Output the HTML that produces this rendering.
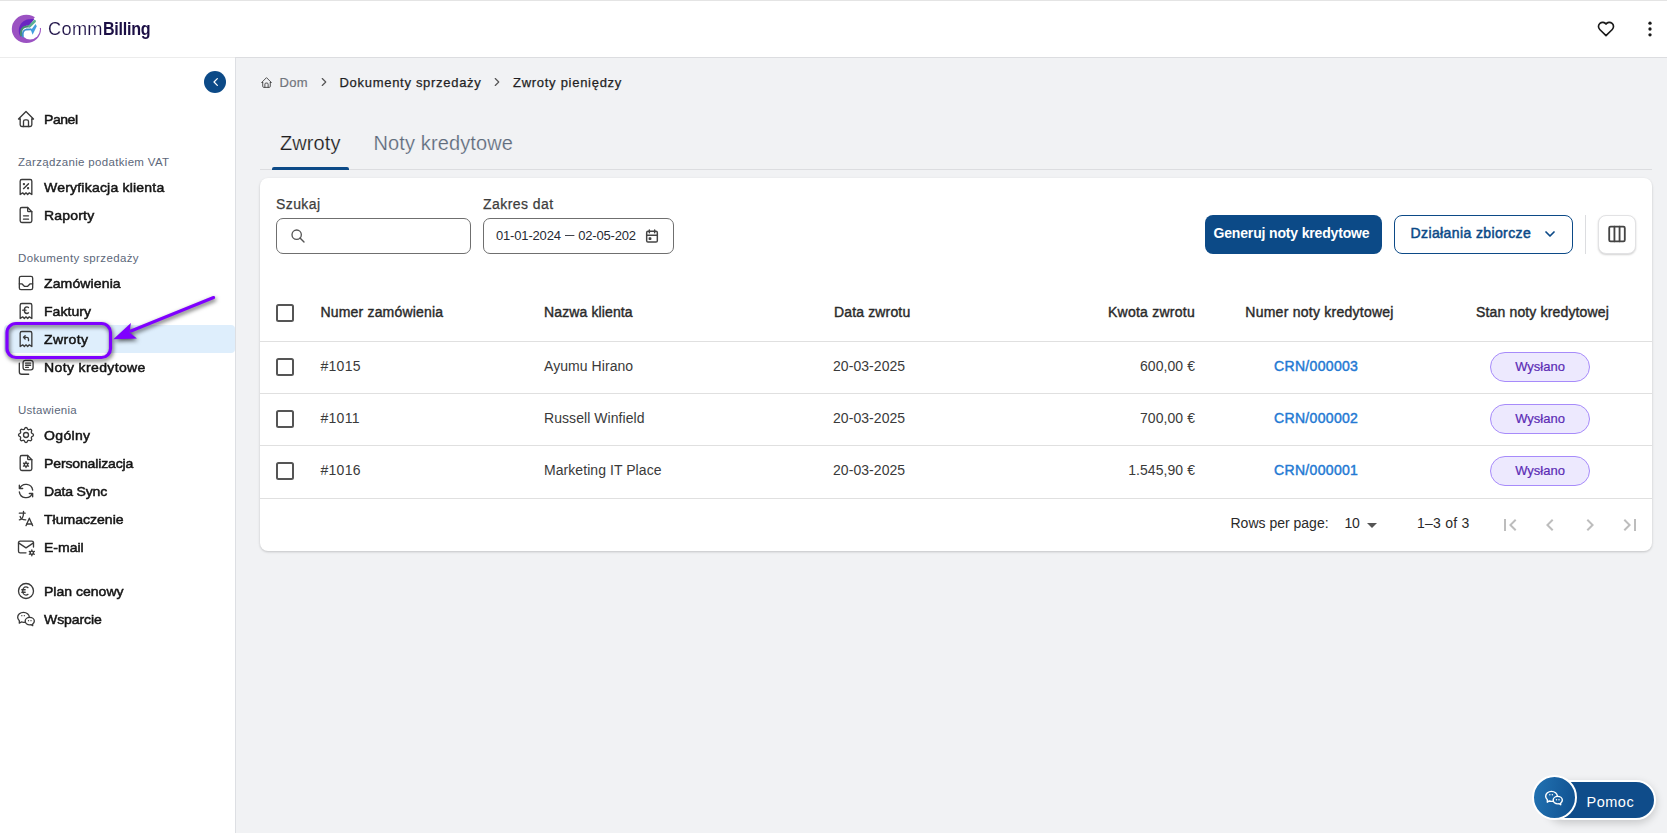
<!DOCTYPE html>
<html lang="pl">
<head>
<meta charset="utf-8">
<title>CommBilling – Zwroty pieniędzy</title>
<style>
*{box-sizing:border-box;margin:0;padding:0}
html,body{width:1667px;height:833px;overflow:hidden;background:#f1f2f4;font-family:"Liberation Sans",sans-serif;color:#222}
.abs{position:absolute}
.t{position:absolute;white-space:nowrap;line-height:20px;font-size:14px}
/* header */
#hdr{position:absolute;left:0;top:0;width:1667px;height:58px;background:#fff;border-top:1px solid #e4e4e4;border-bottom:1px solid #dcdde0}
/* sidebar */
#side{position:absolute;left:0;top:58px;width:236px;height:775px;background:#fff;border-right:1px solid #dddfe3}
.nav{position:absolute;left:44px;margin-top:1.100px;white-space:nowrap;font-weight:400;font-size:13.500px;line-height:20px;color:#151515;letter-spacing:0;-webkit-text-stroke:0.500px #151515;transform:scaleX(1.040);transform-origin:0 0}
.sec{position:absolute;left:18px;margin-top:1px;white-space:nowrap;font-size:11.500px;line-height:16px;color:#5c677a}
.ico{position:absolute;left:16px;width:20px;height:20px;fill:none;stroke:#3a3a3a;stroke-width:1.6;stroke-linecap:round;stroke-linejoin:round}
/* main */
#card{position:absolute;left:260px;top:178px;width:1392px;height:373px;background:#fff;border-radius:8px;box-shadow:0 1px 3px rgba(0,0,0,.12),0 1px 2px rgba(0,0,0,.08)}
.hl{position:absolute;left:0;width:1392px;height:1px;background:#e0e0e0}
.cb{position:absolute;left:16px;width:18px;height:18px;border:2px solid #555;border-radius:2.5px;background:#fff}
.th{position:absolute;white-space:nowrap;font-weight:400;font-size:14px;line-height:20px;color:#2a2a2a;letter-spacing:0.15px;-webkit-text-stroke:0.4px #2a2a2a}
.td{position:absolute;white-space:nowrap;font-size:14px;line-height:20px;color:#3a3a3a;letter-spacing:0.06px}
.lnk{position:absolute;white-space:nowrap;font-weight:400;font-size:14px;line-height:20px;color:#2479d3;letter-spacing:0.330px;-webkit-text-stroke:0.450px #2479d3}
.chip{-webkit-text-stroke:0.200px #5b2bb5;position:absolute;left:1230px;width:100px;height:30px;border:1px solid #a78bfa;border-radius:15px;background:#ede9fe;color:#5b2bb5;font-size:13px;line-height:28px;text-align:center}
.bc{color:#1f1f24;-webkit-text-stroke:0.250px #1f1f24}
.lbl{color:#3d3d3d;-webkit-text-stroke:0.25px #3d3d3d}
.inp{position:absolute;height:36px;border:1px solid #6f6f6f;border-radius:7px;background:#fff}
.btn{font-size:14px}
.pg{width:24px;height:24px;fill:#bdbdbd}
</style>
</head>
<body>
<!-- HEADER -->
<div id="hdr">
  <svg class="abs" style="left:8px;top:10px" width="38" height="36" viewBox="8 11 38 36">
    <ellipse cx="26.400" cy="28.950" rx="14.600" ry="14.100" fill="#9b52c2"/>
    <circle cx="30.100" cy="29.600" r="9.900" fill="#fff"/>
    <path d="M39.200 11L29.200 25.300L30.500 29.700L41.800 27.800L46 28V11z" fill="#fff"/>
    <path d="M20.200 36.500C18 32 18.300 26.500 22 22.500C25 19.300 29.500 18.500 34.300 19.100L29.400 25.800C26.500 25.600 24 26 22.500 28C21 30 20.500 33 20.800 36.500z" fill="#6a25c2"/>
    <path d="M21.100 35.400C20.600 30.500 22.500 27.400 25.600 26.800L29.700 26.200" fill="none" stroke="#468d72" stroke-width="2" stroke-linecap="round" stroke-linejoin="round"/>
    <path d="M29.500 26.400L34.600 21.300" fill="none" stroke="#5bb192" stroke-width="2.700" stroke-linecap="round"/>
    <path d="M22.900 36.600C22.200 32.500 23.600 30.200 26.200 29.500L31 29.400" fill="none" stroke="#3f8fd0" stroke-width="1.800" stroke-linecap="round"/>
    <path d="M30 28.400L31.600 29.300L35.500 24L36.800 26.200L32.600 34.800L31.300 31.300z" fill="#449ee0"/>
  </svg>
  <span class="t" style="left:48px;top:18.100px;font-size:17.500px;color:#1c0f45;letter-spacing:0.300px;-webkit-text-stroke:0.150px #fff;transform:scaleX(1.040);transform-origin:0 0">Comm</span>
  <span class="t" style="left:103.200px;top:18.100px;font-size:17.500px;font-weight:700;color:#1c0f45;letter-spacing:-0.300px;transform:scaleX(0.920);transform-origin:0 0">Billing</span>
  <svg class="abs" style="left:1595.900px;top:18.300px" width="20" height="20" viewBox="0 0 24 24" fill="none" stroke="#1a1a1a" stroke-width="2" stroke-linecap="round" stroke-linejoin="round"><path d="M19.5 12.572l-7.5 7.428l-7.5 -7.428a5 5 0 1 1 7.5 -6.566a5 5 0 1 1 7.500 6.572"/></svg>
  <svg class="abs" style="left:1639.900px;top:18px" width="20" height="20" viewBox="0 0 24 24" fill="#1a1a1a" stroke="none"><circle cx="12" cy="5" r="2"/><circle cx="12" cy="12" r="2"/><circle cx="12" cy="19" r="2"/></svg>
</div>

<div class="abs" style="left:0;top:57px;width:235px;height:1px;background:#ececec"></div>
<!-- SIDEBAR -->
<div id="side">
  <div class="abs" style="left:4px;top:267px;width:231px;height:28px;background:#deeefc;border-radius:4px"></div>
  <div class="abs" style="left:204px;top:13px;width:22px;height:22px;border-radius:11px;background:#0c4a87"><svg class="abs" style="left:3.800px;top:3px" width="16" height="16" viewBox="0 0 24 24" fill="none" stroke="#fff" stroke-width="1.900" stroke-linecap="round" stroke-linejoin="round"><path d="M14 7l-5 5l5 5"/></svg></div>
  <svg class="ico" style="top:51px" viewBox="0 0 24 24"><path d="M5 12l-2 0l9 -9l9 9l-2 0"/><path d="M5 12v7a2 2 0 0 0 2 2h10a2 2 0 0 0 2 -2v-7"/><path d="M9 21v-6a2 2 0 0 1 2 -2h2a2 2 0 0 1 2 2v6"/></svg>
  <span class="nav" style="top:51px;letter-spacing:-0.443px">Panel</span>
  <svg class="ico" style="top:119px" viewBox="0 0 24 24"><path d="M5 21v-16a2 2 0 0 1 2 -2h10a2 2 0 0 1 2 2v16l-3 -2l-2 2l-2 -2l-2 2l-2 -2l-3 2"/><path d="M9 14l6 -6"/><circle cx="9.5" cy="8.5" r=".6" fill="#3a3a3a"/><circle cx="14.5" cy="13.5" r=".6" fill="#3a3a3a"/></svg>
  <span class="nav" style="top:119px;letter-spacing:0.186px">Weryfikacja klienta</span>
  <svg class="ico" style="top:147px" viewBox="0 0 24 24"><path d="M14 3v4a1 1 0 0 0 1 1h4"/><path d="M17 21h-10a2 2 0 0 1 -2 -2v-14a2 2 0 0 1 2 -2h7l5 5v11a2 2 0 0 1 -2 2z"/><path d="M9 13h6"/><path d="M9 17h6"/></svg>
  <span class="nav" style="top:147px;letter-spacing:0.159px">Raporty</span>
  <svg class="ico" style="top:215px" viewBox="0 0 24 24"><path d="M4 6a2 2 0 0 1 2 -2h12a2 2 0 0 1 2 2v12a2 2 0 0 1 -2 2h-12a2 2 0 0 1 -2 -2z"/><path d="M4 13h3l3 3h4l3 -3h3"/></svg>
  <span class="nav" style="top:215px;letter-spacing:0.104px">Zamówienia</span>
  <svg class="ico" style="top:243px" viewBox="0 0 24 24"><path d="M5 21v-16a2 2 0 0 1 2 -2h10a2 2 0 0 1 2 2v16l-3 -2l-2 2l-2 -2l-2 2l-2 -2l-3 2"/><path d="M15 7.8c-.523 -.502 -1.172 -.8 -1.875 -.8c-1.727 0 -3.125 1.791 -3.125 4s1.398 4 3.125 4c.703 0 1.352 -.298 1.874 -.8"/><path d="M8 11h4"/></svg>
  <span class="nav" style="top:243px;letter-spacing:0.037px">Faktury</span>
  <svg class="ico" style="top:271px" viewBox="0 0 24 24"><path d="M5 21v-16a2 2 0 0 1 2 -2h10a2 2 0 0 1 2 2v16l-3 -2l-2 2l-2 -2l-2 2l-2 -2l-3 2"/><path d="M15 14v-2a2 2 0 0 0 -2 -2h-4l2 -2m0 4l-2 -2"/></svg>
  <span class="nav" style="top:271px;letter-spacing:0.349px">Zwroty</span>
  <svg class="ico" style="top:299px" viewBox="0 0 24 24"><path d="M11.200 4h6.600a2.700 2.700 0 0 1 2.700 2.700v6a2.700 2.700 0 0 1 -2.700 2.700h-6.600a2.700 2.700 0 0 1 -2.700 -2.700v-6a2.700 2.700 0 0 1 2.700 -2.700z"/><path d="M11.500 7.400h6"/><path d="M11.500 9.900h6"/><path d="M11.500 12.400h3.400"/><path d="M4 7.500v10.400a2.800 2.800 0 0 0 2.800 2.800h8.400"/></svg>
  <span class="nav" style="top:299px;letter-spacing:0.345px">Noty kredytowe</span>
  <svg class="ico" style="top:367px" viewBox="0 0 24 24"><path d="M10.325 4.317c.426 -1.756 2.924 -1.756 3.35 0a1.724 1.724 0 0 0 2.573 1.066c1.543 -.94 3.31 .826 2.37 2.37a1.724 1.724 0 0 0 1.065 2.572c1.756 .426 1.756 2.924 0 3.35a1.724 1.724 0 0 0 -1.066 2.573c.94 1.543 -.826 3.31 -2.37 2.37a1.724 1.724 0 0 0 -2.572 1.065c-.426 1.756 -2.924 1.756 -3.35 0a1.724 1.724 0 0 0 -2.573 -1.066c-1.543 .94 -3.31 -.826 -2.37 -2.37a1.724 1.724 0 0 0 -1.065 -2.572c-1.756 -.426 -1.756 -2.924 0 -3.35a1.724 1.724 0 0 0 1.066 -2.573c-.94 -1.543 .826 -3.31 2.37 -2.37c1 .608 2.296 .07 2.572 -1.065z"/><path d="M9 12a3 3 0 1 0 6 0a3 3 0 0 0 -6 0"/></svg>
  <span class="nav" style="top:367px;letter-spacing:0.316px">Ogólny</span>
  <svg class="ico" style="top:395px" viewBox="0 0 24 24"><path d="M10 14a2 2 0 1 0 4 0a2 2 0 1 0 -4 0"/><path d="M12 10.5v1.5"/><path d="M12 16v1.5"/><path d="M15.031 12.25l-1.299 .75"/><path d="M10.268 15l-1.3 .75"/><path d="M15 15.803l-1.285 -.773"/><path d="M10.285 12.97l-1.285 -.773"/><path d="M14 3v4a1 1 0 0 0 1 1h4"/><path d="M17 21h-10a2 2 0 0 1 -2 -2v-14a2 2 0 0 1 2 -2h7l5 5v11a2 2 0 0 1 -2 2z"/></svg>
  <span class="nav" style="top:395px;letter-spacing:-0.142px">Personalizacja</span>
  <svg class="ico" style="top:423px" viewBox="0 0 24 24"><path d="M20 11a8.1 8.1 0 0 0 -15.5 -2m-.5 -4v4h4"/><path d="M4 13a8.1 8.1 0 0 0 15.5 2m.5 4v-4h-4"/></svg>
  <span class="nav" style="top:423px;letter-spacing:-0.191px">Data Sync</span>
  <svg class="ico" style="top:451px" viewBox="0 0 24 24"><path d="M4 5h7"/><path d="M9 3v2c0 4.418 -2.239 8 -5 8"/><path d="M5 9c0 2.144 2.952 3.908 6.7 4"/><path d="M12 20l4 -9l4 9"/><path d="M19.1 18h-6.2"/></svg>
  <span class="nav" style="top:451px;letter-spacing:-0.002px">Tłumaczenie</span>
  <svg class="ico" style="top:479px" viewBox="0 0 24 24"><path d="M12 19h-7a2 2 0 0 1 -2 -2v-10a2 2 0 0 1 2 -2h14a2 2 0 0 1 2 2v5"/><path d="M3 7l9 6l9 -6"/><path d="M17 19a2 2 0 1 0 4 0a2 2 0 1 0 -4 0"/><path d="M19 15.5v1.5"/><path d="M19 21v1.5"/><path d="M22.032 17.25l-1.299 .75"/><path d="M17.27 20l-1.3 .75"/><path d="M15.97 17.25l1.3 .75"/><path d="M20.733 20l1.3 .75"/></svg>
  <span class="nav" style="top:479px;letter-spacing:-0.034px">E-mail</span>
  <svg class="ico" style="top:523px" viewBox="0 0 24 24"><path d="M3 12a9 9 0 1 0 18 0a9 9 0 1 0 -18 0"/><path d="M14.401 8c-.669 -.628 -1.5 -1 -2.401 -1c-2.21 0 -4 2.239 -4 5s1.790 5 4 5c.9 0 1.731 -.372 2.4 -1"/><path d="M7 10.5h4"/><path d="M7 13.5h4"/></svg>
  <span class="nav" style="top:523px;letter-spacing:-0.002px">Plan cenowy</span>
  <svg class="ico" style="top:551px" viewBox="0 0 24 24"><path d="M16.5 10c3.038 0 5.5 2.015 5.5 4.500c0 1.397 -.778 2.645 -2 3.470l0 2.030l-1.964 -1.178a6.649 6.649 0 0 1 -1.536 .178c-3.038 0 -5.500 -2.015 -5.500 -4.500s2.462 -4.500 5.500 -4.500z"/><path d="M11.197 15.698c-.69 .196 -1.43 .302 -2.197 .302a8.008 8.008 0 0 1 -2.612 -.432l-2.388 1.432v-2.801c-1.237 -1.082 -2 -2.564 -2 -4.199c0 -3.314 3.134 -6 7 -6c3.782 0 6.863 2.570 7 5.785l0 .233"/><path d="M10 8h.01"/><path d="M7 8h.01"/><path d="M15 14h.01"/><path d="M18 14h.01"/></svg>
  <span class="nav" style="top:551px;letter-spacing:-0.104px">Wsparcie</span>
  <span class="sec" style="top:95px;letter-spacing:0.320px">Zarządzanie podatkiem VAT</span>
  <span class="sec" style="top:191px;letter-spacing:0.380px">Dokumenty sprzedaży</span>
  <span class="sec" style="top:343px;letter-spacing:0.270px">Ustawienia</span>
</div>

<!-- annotation -->
<svg class="abs" style="left:0;top:280px;filter:drop-shadow(1.500px 2.500px 2.200px rgba(0,0,0,.65))" width="240" height="100" viewBox="0 280 240 100">
  <rect x="7" y="323.500" width="103.500" height="34" rx="9" ry="9" fill="none" stroke="#7f00ff" stroke-width="3.200"/>
  <path d="M213.600 297.500L131 331" fill="none" stroke="#7f00ff" stroke-width="3" stroke-linecap="round"/>
  <path d="M113.300 339.200L130.900 323L129.600 332.500L136.900 338.500z" fill="#7f00ff"/>
</svg>
<!-- MAIN -->
<!-- breadcrumb -->
<svg class="abs" style="left:260px;top:76px" width="13" height="13" viewBox="0 0 24 24" fill="none" stroke="#444" stroke-width="1.700" stroke-linecap="round" stroke-linejoin="round"><path d="M5 12l-2 0l9 -9l9 9l-2 0"/><path d="M5 12v7a2 2 0 0 0 2 2h10a2 2 0 0 0 2 -2v-7"/><path d="M9 21v-6a2 2 0 0 1 2 -2h2a2 2 0 0 1 2 2v6"/></svg>
<span class="t" style="left:279.500px;top:73.100px;font-size:13px;color:#71757c;letter-spacing:0.330px;-webkit-text-stroke:0.200px #71757c">Dom</span>
<svg class="abs" style="left:317px;top:75px" width="14" height="14" viewBox="0 0 24 24" fill="none" stroke="#555" stroke-width="2" stroke-linecap="round" stroke-linejoin="round"><path d="M9 6l6 6l-6 6"/></svg>
<span class="t bc" style="left:339.500px;top:73.100px;font-size:13px;letter-spacing:0.705px">Dokumenty sprzedaży</span>
<svg class="abs" style="left:490px;top:75px" width="14" height="14" viewBox="0 0 24 24" fill="none" stroke="#555" stroke-width="2" stroke-linecap="round" stroke-linejoin="round"><path d="M9 6l6 6l-6 6"/></svg>
<span class="t bc" style="left:513px;top:73.100px;font-size:13px;letter-spacing:0.720px">Zwroty pieniędzy</span>

<!-- tabs -->
<span class="t" style="left:280px;top:128.600px;font-size:20px;line-height:28px;color:#1f1f1f;letter-spacing:0.080px;-webkit-text-stroke:0.200px #f1f2f4">Zwroty</span>
<span class="t" style="left:373.500px;top:128.600px;font-size:20px;line-height:28px;color:#5f6b7c;letter-spacing:0.120px;-webkit-text-stroke:0.200px #f1f2f4">Noty kredytowe</span>
<div class="abs" style="left:260px;top:169px;width:1392px;height:1px;background:#dcdde0"></div>
<div class="abs" style="left:272px;top:167px;width:77px;height:3px;background:#0c4a87;border-radius:2px 2px 0 0"></div>

<div id="card">
  <!-- filters -->
  <span class="t lbl" style="left:16px;top:16px;letter-spacing:0.4px">Szukaj</span>
  <div class="inp" style="left:16px;top:40px;width:195px"></div>
  <svg class="abs" style="left:30px;top:50px" width="16" height="16" viewBox="0 0 24 24" fill="none" stroke="#555" stroke-width="2" stroke-linecap="round" stroke-linejoin="round"><path d="M3 10a7 7 0 1 0 14 0a7 7 0 1 0 -14 0"/><path d="M21 21l-6 -6"/></svg>
  <span class="t lbl" style="left:223px;top:16px;letter-spacing:0.45px">Zakres dat</span>
  <div class="inp" style="left:223px;top:40px;width:191px"></div>
  <span class="t" style="left:236px;top:47.500px;font-size:13px;color:#262a33;letter-spacing:-0.170px;word-spacing:1.700px">01-01-2024 <span style="display:inline-block;position:relative;top:-1px;transform:scaleX(1.300)">–</span> 02-05-202</span>
  <svg class="abs" style="left:384px;top:50px" width="16" height="16" viewBox="0 0 24 24" fill="none" stroke="#444" stroke-width="2.2" stroke-linecap="round" stroke-linejoin="round"><path d="M4 7a2 2 0 0 1 2 -2h12a2 2 0 0 1 2 2v12a2 2 0 0 1 -2 2h-12a2 2 0 0 1 -2 -2z"/><path d="M16 3v4"/><path d="M8 3v4"/><path d="M4 11h16"/><path d="M8 15h2v2h-2z" fill="#444"/></svg>

  <!-- actions -->
  <div class="abs" style="left:945px;top:37px;width:177px;height:39px;border-radius:8px;background:#0c4a87"></div>
  <span class="t btn" style="left:953.500px;top:45px;color:#fff;font-weight:700;letter-spacing:-0.160px">Generuj noty kredytowe</span>
  <div class="abs" style="left:1134px;top:37px;width:179px;height:39px;border-radius:8px;border:1.5px solid #0c4a87;background:#fff"></div>
  <span class="t btn" style="left:1150.500px;top:45px;color:#0c4a87;-webkit-text-stroke:0.500px #0c4a87;letter-spacing:0.390px">Działania zbiorcze</span>
  <svg class="abs" style="left:1282px;top:48px" width="16" height="16" viewBox="0 0 24 24" fill="none" stroke="#0c4a87" stroke-width="2.6" stroke-linecap="round" stroke-linejoin="round"><path d="M6 9l6 6l6 -6"/></svg>
  <div class="abs" style="left:1325px;top:37px;width:1px;height:39px;background:#dcdde0"></div>
  <div class="abs" style="left:1338px;top:37px;width:38px;height:39px;border-radius:8px;border:1px solid #e2e2e4;background:#fff;box-shadow:0 1px 2px rgba(0,0,0,.18)"></div>
  <svg class="abs" style="left:1346px;top:45px" width="22" height="22" viewBox="0 0 24 24" fill="none" stroke="#444" stroke-width="2" stroke-linecap="round" stroke-linejoin="round"><path d="M3.500 5.500a1.500 1.500 0 0 1 1.500 -1.500h14a1.500 1.500 0 0 1 1.500 1.500v13a1.500 1.500 0 0 1 -1.500 1.500h-14a1.500 1.500 0 0 1 -1.500 -1.500z"/><path d="M9.200 4v16"/><path d="M14.800 4v16"/></svg>

  <!-- table header -->
  <div class="cb" style="top:126px"></div>
  <span class="th" style="left:60.5px;top:124px;letter-spacing:0.18px">Numer zamówienia</span>
  <span class="th" style="left:284px;top:124px;letter-spacing:0.12px">Nazwa klienta</span>
  <span class="th" style="left:574px;top:124px">Data zwrotu</span>
  <span class="th" style="right:457px;top:124px;letter-spacing:0.250px">Kwota zwrotu</span>
  <span class="th" style="left:985.300px;top:124px;letter-spacing:0.250px">Numer noty kredytowej</span>
  <span class="th" style="left:1216px;top:124px">Stan noty kredytowej</span>
  <div class="hl" style="top:163px"></div>

  <!-- rows -->
  <div class="cb" style="top:180px"></div>
  <span class="td" style="left:60.5px;top:178px;letter-spacing:0.27px">#1015</span>
  <span class="td" style="left:284px;top:178px">Ayumu Hirano</span>
  <span class="td" style="left:573px;top:178px">20-03-2025</span>
  <span class="td" style="right:457px;top:178px">600,00 €</span>
  <span class="lnk" style="left:1014px;top:178px">CRN/000003</span>
  <div class="chip" style="top:174px">Wysłano</div>
  <div class="hl" style="top:215px"></div>

  <div class="cb" style="top:232px"></div>
  <span class="td" style="left:60.5px;top:230px;letter-spacing:0.27px">#1011</span>
  <span class="td" style="left:284px;top:230px">Russell Winfield</span>
  <span class="td" style="left:573px;top:230px">20-03-2025</span>
  <span class="td" style="right:457px;top:230px">700,00 €</span>
  <span class="lnk" style="left:1014px;top:230px">CRN/000002</span>
  <div class="chip" style="top:226px">Wysłano</div>
  <div class="hl" style="top:267px"></div>

  <div class="cb" style="top:284px"></div>
  <span class="td" style="left:60.5px;top:282px;letter-spacing:0.27px">#1016</span>
  <span class="td" style="left:284px;top:282px">Marketing IT Place</span>
  <span class="td" style="left:573px;top:282px">20-03-2025</span>
  <span class="td" style="right:457px;top:282px">1.545,90 €</span>
  <span class="lnk" style="left:1014px;top:282px">CRN/000001</span>
  <div class="chip" style="top:278px">Wysłano</div>
  <div class="hl" style="top:320px"></div>

  <!-- pagination -->
  <span class="td" style="left:970.500px;top:335px;letter-spacing:0;color:#2a2a2a">Rows per page:</span>
  <span class="td" style="left:1084.500px;top:335px;letter-spacing:-0.200px;color:#2a2a2a">10</span>
  <svg class="abs" style="left:1107px;top:344.500px" width="10" height="5" viewBox="0 0 10 5"><path d="M0 0h10l-5 5z" fill="#555"/></svg>
  <span class="td" style="left:1157px;top:335px;letter-spacing:0.240px;color:#2a2a2a">1–3 of 3</span>
  <svg class="abs pg" style="left:1238px;top:334.800px" viewBox="0 0 24 24"><path d="M18.410 16.590L13.820 12l4.590 -4.590L17 6l-6 6l6 6zM6 6h2v12H6z"/></svg>
  <svg class="abs pg" style="left:1278px;top:334.800px" viewBox="0 0 24 24"><path d="M15.410 7.410L14 6l-6 6l6 6l1.410 -1.410L10.830 12z"/></svg>
  <svg class="abs pg" style="left:1318px;top:334.800px" viewBox="0 0 24 24"><path d="M10 6L8.590 7.410L13.170 12l-4.580 4.590L10 18l6 -6z"/></svg>
  <svg class="abs pg" style="left:1358px;top:334.800px" viewBox="0 0 24 24"><path d="M5.590 7.410L10.180 12l-4.590 4.590L7 18l6 -6l-6 -6zM16 6h2v12h-2z"/></svg>
</div>

<!-- help widget -->
<div class="abs" style="left:1545px;top:780px;width:111px;height:40px;border-radius:20px;background:#0f4c8a;border:2px solid #fff;box-shadow:0 3px 8px rgba(0,0,0,.18)"></div>
<span class="t" style="left:1586.500px;top:791.500px;font-size:14.500px;color:#fff;letter-spacing:0.500px">Pomoc</span>
<div class="abs" style="left:1532.300px;top:775.200px;width:44.600px;height:44.600px;border-radius:23px;background:linear-gradient(100deg,#2273b3,#10508f);border:2px solid #fff"></div>
<svg class="abs" style="left:1544px;top:788px" width="20" height="20" viewBox="0 0 24 24" fill="none" stroke="#fff" stroke-width="1.700" stroke-linecap="round" stroke-linejoin="round"><path d="M16.5 10c3.038 0 5.500 2.015 5.500 4.500c0 1.397 -.778 2.645 -2 3.470l0 2.030l-1.964 -1.178a6.649 6.649 0 0 1 -1.536 .178c-3.038 0 -5.500 -2.015 -5.500 -4.500s2.462 -4.500 5.500 -4.500z"/><path d="M11.197 15.698c-.69 .196 -1.430 .302 -2.197 .302a8.008 8.008 0 0 1 -2.612 -.432l-2.388 1.432v-2.801c-1.237 -1.082 -2 -2.564 -2 -4.199c0 -3.314 3.134 -6 7 -6c3.782 0 6.863 2.570 7 5.785l0 .233"/><path d="M10 8h.01"/><path d="M7 8h.01"/><path d="M15 14h.01"/><path d="M18 14h.01"/></svg>
</body>
</html>
